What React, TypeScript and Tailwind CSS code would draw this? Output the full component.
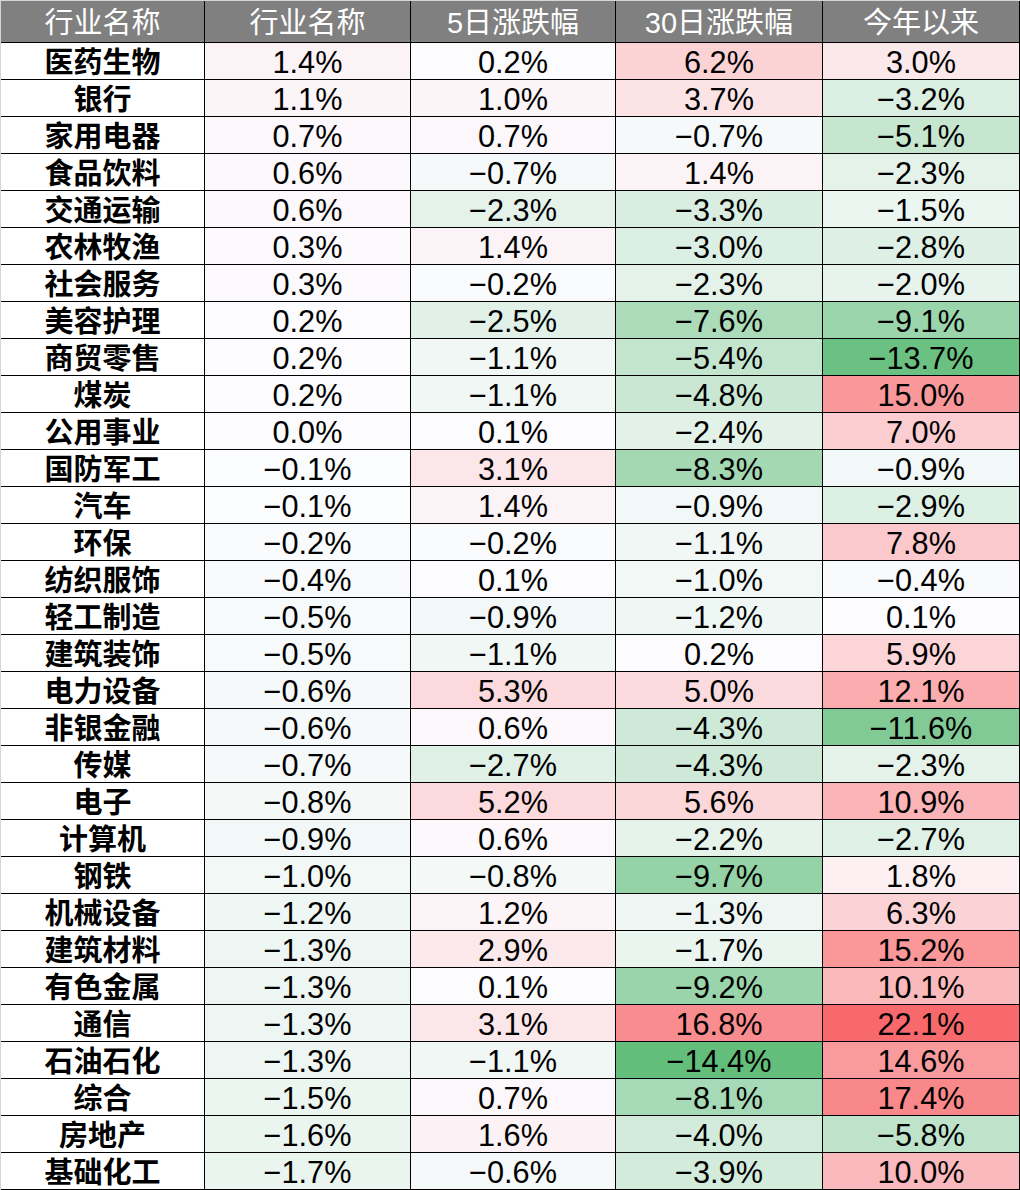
import React from 'react';

type Row = [string, number, number, number, number];

const rows: Row[] = [
  ['医药生物', 1.4, 0.2, 6.2, 3.0],
  ['银行', 1.1, 1.0, 3.7, -3.2],
  ['家用电器', 0.7, 0.7, -0.7, -5.1],
  ['食品饮料', 0.6, -0.7, 1.4, -2.3],
  ['交通运输', 0.6, -2.3, -3.3, -1.5],
  ['农林牧渔', 0.3, 1.4, -3.0, -2.8],
  ['社会服务', 0.3, -0.2, -2.3, -2.0],
  ['美容护理', 0.2, -2.5, -7.6, -9.1],
  ['商贸零售', 0.2, -1.1, -5.4, -13.7],
  ['煤炭', 0.2, -1.1, -4.8, 15.0],
  ['公用事业', 0.0, 0.1, -2.4, 7.0],
  ['国防军工', -0.1, 3.1, -8.3, -0.9],
  ['汽车', -0.1, 1.4, -0.9, -2.9],
  ['环保', -0.2, -0.2, -1.1, 7.8],
  ['纺织服饰', -0.4, 0.1, -1.0, -0.4],
  ['轻工制造', -0.5, -0.9, -1.2, 0.1],
  ['建筑装饰', -0.5, -1.1, 0.2, 5.9],
  ['电力设备', -0.6, 5.3, 5.0, 12.1],
  ['非银金融', -0.6, 0.6, -4.3, -11.6],
  ['传媒', -0.7, -2.7, -4.3, -2.3],
  ['电子', -0.8, 5.2, 5.6, 10.9],
  ['计算机', -0.9, 0.6, -2.2, -2.7],
  ['钢铁', -1.0, -0.8, -9.7, 1.8],
  ['机械设备', -1.2, 1.2, -1.3, 6.3],
  ['建筑材料', -1.3, 2.9, -1.7, 15.2],
  ['有色金属', -1.3, 0.1, -9.2, 10.1],
  ['通信', -1.3, 3.1, 16.8, 22.1],
  ['石油石化', -1.3, -1.1, -14.4, 14.6],
  ['综合', -1.5, 0.7, -8.1, 17.4],
  ['房地产', -1.6, 1.6, -4.0, -5.8],
  ['基础化工', -1.7, -0.6, -3.9, 10.0],
];

const headers = ['行业名称', '行业名称', '5日涨跌幅', '30日涨跌幅', '今年以来'];

const MIN = -14.4;
const MAX = 22.1;
const WHITE = [252, 252, 255];
const RED = [248, 105, 107];
const GREEN = [99, 190, 123];

// excel-style 3 colour scale, midpoint at 0
function heat(v: number) {
  const target = v >= 0 ? RED : GREEN;
  const t = v >= 0 ? v / MAX : v / MIN;
  const c = WHITE.map((w, i) => Math.round(w + (target[i] - w) * t));
  return `rgb(${c[0]}, ${c[1]}, ${c[2]})`;
}

function fmt(v: number) {
  const s = Math.abs(v).toFixed(1) + '%';
  return v < 0 ? '\u2212' + s : s;
}

const grid = 'grid grid-cols-[204px_206px_205px_207px_197px]';
const font = "font-['Liberation_Sans','Noto_Sans_CJK_SC',sans-serif]";

export default function App() {
  return (
    <div className={`w-[1020px] h-[1190px] bg-white ${font}`}>
      <div className="border-l border-t border-[#d6d6d6]">
        <div className={`${grid} h-[42px] bg-[#808080] border-b border-black`}>
          {headers.map((h, i) => (
            <div
              key={i}
              className="flex items-center justify-center border-r border-black pt-[4px] text-[29px] leading-none text-white"
            >
              {h}
            </div>
          ))}
        </div>
        {rows.map(([name, ...vals]) => (
          <div key={name} className={`${grid} h-[37px] border-b border-black`}>
            <div className="flex items-center justify-center border-r border-black pt-[4px] text-[29px] font-bold leading-none text-black">
              {name}
            </div>
            {vals.map((v, i) => (
              <div
                key={i}
                className="flex items-center justify-center border-r border-black pt-[4px] text-[30.7px] leading-none text-black"
                style={{ backgroundColor: heat(v) }}
              >
                {fmt(v)}
              </div>
            ))}
          </div>
        ))}
      </div>
    </div>
  );
}
